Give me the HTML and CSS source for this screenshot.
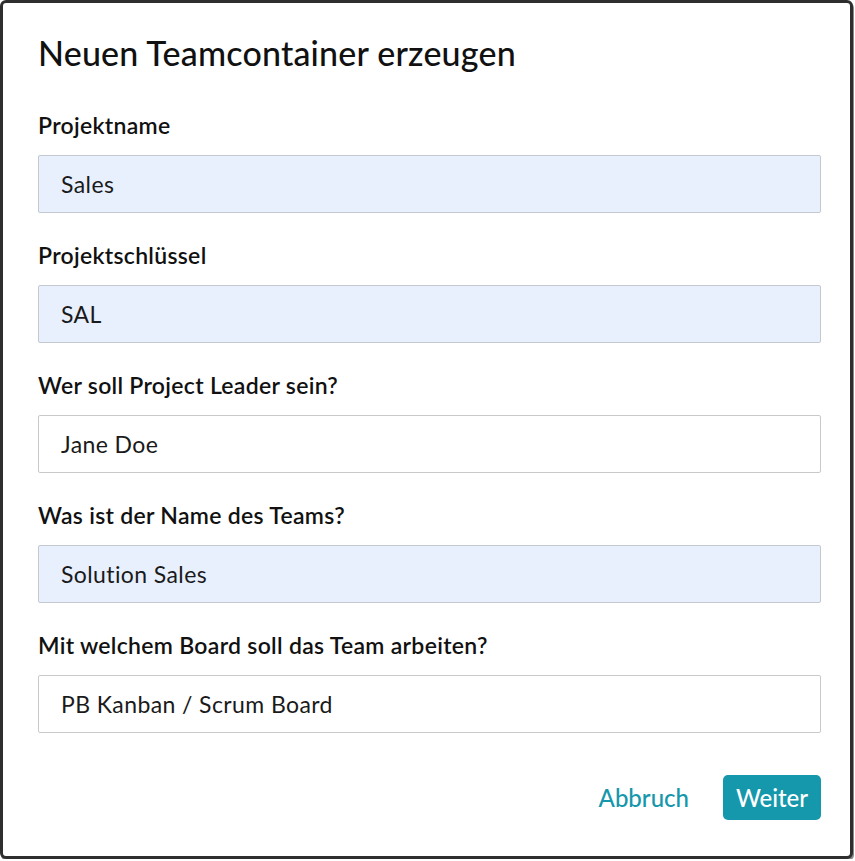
FILE: index.html
```html
<!DOCTYPE html>
<html lang="de">
<head>
<meta charset="utf-8">
<title>Neuen Teamcontainer erzeugen</title>
<link rel="stylesheet" href="styles.css">
</head>
<body>
<div class="dialog">
  <h1 class="title">Neuen Teamcontainer erzeugen</h1>
  <form class="form">
    <div class="field">
      <label class="label">Projektname</label>
      <div class="input filled">Sales</div>
    </div>
    <div class="field">
      <label class="label">Projektschlüssel</label>
      <div class="input filled">SAL</div>
    </div>
    <div class="field">
      <label class="label">Wer soll Project Leader sein?</label>
      <div class="input">Jane Doe</div>
    </div>
    <div class="field">
      <label class="label">Was ist der Name des Teams?</label>
      <div class="input filled">Solution Sales</div>
    </div>
    <div class="field">
      <label class="label">Mit welchem Board soll das Team arbeiten?</label>
      <div class="input">PB Kanban / Scrum Board</div>
    </div>
  </form>
  <div class="actions">
    <span class="btn-link">Abbruch</span>
    <span class="btn-primary">Weiter</span>
  </div>
</div>
</body>
</html>
```
FILE: styles.css
```css
html, body {
  margin: 0;
  padding: 0;
  background: #ffffff;
}
body {
  font-family: Lato, "Noto Sans", sans-serif;
  color: #111;
}
.dialog {
  box-sizing: border-box;
  width: 853px;
  height: 859px;
  border: 3px solid #2e2e2e;
  border-radius: 6px;
  box-shadow: 1px 2px 0 #8a8a8a;
  padding: 30px 29px 0 35px;
  background: #fff;
}
.title {
  margin: 0 0 37px;
  font-size: 34px;
  line-height: 40px;
  font-weight: 500;
  letter-spacing: 0.2px;
}
.form {
  display: flex;
  flex-direction: column;
  gap: 27px;
}
.field {
  display: flex;
  flex-direction: column;
  gap: 15px;
}
.label {
  font-size: 23px;
  line-height: 30px;
  font-weight: 600;
  letter-spacing: 0.3px;
}
.input {
  box-sizing: border-box;
  height: 58px;
  border: 1px solid #c9c9c9;
  border-radius: 2px;
  padding: 0 22px;
  display: flex;
  align-items: center;
  font-size: 23px;
  letter-spacing: 0.4px;
  color: #1a1a1a;
  background: #fff;
}
.input.filled {
  background: #e8f0fe;
  border-color: #c4c8d0;
}
.actions {
  margin-top: 42px;
  display: flex;
  justify-content: flex-end;
  align-items: center;
  gap: 34px;
}
.btn-link {
  color: #1597ac;
  font-size: 24px;
  font-weight: 500;
}
.btn-primary {
  box-sizing: border-box;
  width: 98px;
  height: 45px;
  border-radius: 5px;
  background: #1597ac;
  color: #fff;
  font-size: 24px;
  font-weight: 500;
  display: flex;
  align-items: center;
  justify-content: center;
}
```
